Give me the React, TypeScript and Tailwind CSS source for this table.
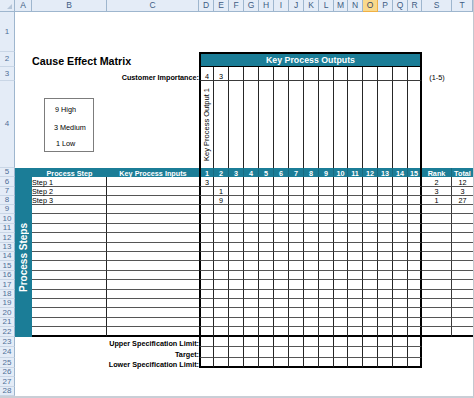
import clsx from 'clsx'

const LETTERS = ['A', 'B', 'C', 'D', 'E', 'F', 'G', 'H', 'I', 'J', 'K', 'L', 'M', 'N', 'O', 'P', 'Q', 'R', 'S', 'T']

// widths in px: row header, A, B, C, D..R (15 cols), S, T
const COL_W = [
  'w-[15px]', 'w-[17px]', 'w-[75px]', 'w-[92px]',
  'w-[15px]', 'w-[15px]', 'w-[15px]', 'w-[15px]', 'w-[15px]', 'w-[15px]', 'w-[15px]', 'w-[15px]', 'w-[15px]',
  'w-[14px]', 'w-[15px]', 'w-[15px]', 'w-[15px]', 'w-[15px]', 'w-[14px]',
  'w-[30px]', 'w-[21px]',
]

const KPO = Array.from({ length: 15 }, (_, i) => i + 1)

const IMPORTANCE = ['4', '3']

// process step rows 6-22
const STEP_ROWS = [
  { n: 6, h: 'h-[10px]', step: 'Step 1', scores: { 0: '3' } as Record<number, string>, rank: '2', total: '12' },
  { n: 7, h: 'h-[9px]', step: 'Step 2', scores: { 1: '1' } as Record<number, string>, rank: '3', total: '3' },
  { n: 8, h: 'h-[9px]', step: 'Step 3', scores: { 1: '9' } as Record<number, string>, rank: '1', total: '27' },
  { n: 9, h: 'h-[9px]' },
  { n: 10, h: 'h-[10px]' },
  { n: 11, h: 'h-[9px]' },
  { n: 12, h: 'h-[10px]' },
  { n: 13, h: 'h-[9px]' },
  { n: 14, h: 'h-[9px]' },
  { n: 15, h: 'h-[10px]' },
  { n: 16, h: 'h-[9px]' },
  { n: 17, h: 'h-[10px]' },
  { n: 18, h: 'h-[9px]' },
  { n: 19, h: 'h-[9px]' },
  { n: 20, h: 'h-[10px]' },
  { n: 21, h: 'h-[9px]' },
  { n: 22, h: 'h-[10px]' },
]

const SPEC_ROWS = [
  { n: 23, h: 'h-[10px]', label: 'Upper Specification Limit:' },
  { n: 24, h: 'h-[11px]', label: 'Target:' },
  { n: 25, h: 'h-[10px]', label: 'Lower Specification Limit:' },
]

const EMPTY_ROWS = [
  { n: 26, h: 'h-[9px]' },
  { n: 27, h: 'h-[10px]' },
  { n: 28, h: 'h-[9px]' },
]

const rowHead = 'bg-[#e4ecf7] border-r border-b border-r-[#9eb6ce] border-b-[#c9d6e6] text-center !align-middle text-[8px] text-[#4f6f98]'
const teal = 'bg-[#1b7d97] text-white font-bold'
const gridBottom = 'border-b border-b-[#555555]'

function kpoCell(i: number, bottom?: string) {
  return clsx(
    i === 0 && 'border-l-2 border-l-black',
    i === 14 ? 'border-r-2 border-r-black' : 'border-r border-r-[#262626]',
    bottom
  )
}

function RowHeader({ n, tall }: { n: number; tall?: boolean }) {
  return <td className={clsx(rowHead, tall && '!align-bottom pb-[2px]')}>{n}</td>
}

export default function App() {
  return (
    <div className="relative w-[474px] h-[398px] overflow-hidden bg-white font-['Liberation_Sans',Arial,sans-serif] text-black">
      <table className="w-[473px] table-fixed border-separate border-spacing-0 border-r border-r-[#c3c8d0] leading-none text-[7.25px] [&_td]:p-0 [&_td]:align-bottom [&_th]:p-0">
        <colgroup>
          {COL_W.map((w, i) => (
            <col key={i} className={w} />
          ))}
        </colgroup>
        <thead>
          <tr className="h-[12px]">
            <th className="relative bg-[#e4ecf7] border-r border-b border-[#9eb6ce]">
              <svg className="absolute right-[2px] bottom-[2px]" width="5" height="5" viewBox="0 0 5 5">
                <path d="M5 0 L5 5 L0 5 Z" fill="#b6c6d9" />
              </svg>
            </th>
            {LETTERS.map((l) => (
              <th
                key={l}
                className={clsx(
                  'border-r border-b text-[8.5px] font-normal',
                  l === 'O'
                    ? 'bg-[#f9d98b] border-[#f0b045] text-[#3a4a66]'
                    : 'bg-[#e4ecf7] border-[#9eb6ce] text-[#3e5c84]'
                )}
              >
                {l}
              </th>
            ))}
          </tr>
        </thead>
        <tbody>
          {/* row 1 */}
          <tr className="h-[40px]">
            <RowHeader n={1} tall />
            <td colSpan={20} />
          </tr>

          {/* row 2: title + outputs banner */}
          <tr className="h-[15px]">
            <RowHeader n={2} />
            <td />
            <td className="pl-[2px] whitespace-nowrap text-[10.7px] font-bold">Cause Effect Matrix</td>
            <td />
            <td
              colSpan={15}
              className={clsx(teal, 'text-center !align-middle text-[8.8px] border-t-2 border-l-2 border-r-2 border-b border-black')}
            >
              Key Process Outputs
            </td>
            <td />
            <td />
          </tr>

          {/* row 3: importance */}
          <tr className="h-[14px]">
            <RowHeader n={3} />
            <td />
            <td />
            <td className="pr-[1px] pb-[1px] text-right whitespace-nowrap font-bold">Customer Importance:</td>
            {KPO.map((k, i) => (
              <td key={k} className={clsx(kpoCell(i, 'border-b border-b-[#3a3a3a]'), 'text-center')}>
                {IMPORTANCE[i] ?? ''}
              </td>
            ))}
            <td className="text-center pb-[1px]">(1-5)</td>
            <td />
          </tr>

          {/* row 4: output names */}
          <tr className="h-[87px]">
            <RowHeader n={4} tall />
            <td />
            <td />
            <td />
            {KPO.map((k, i) => (
              <td key={k} className={kpoCell(i)}>
                {i === 0 && (
                  <div className="flex justify-center pb-[7px]">
                    <span className="[writing-mode:vertical-rl] rotate-180 whitespace-nowrap text-[7.5px]">
                      Key Process Output 1
                    </span>
                  </div>
                )}
              </td>
            ))}
            <td />
            <td />
          </tr>

          {/* row 5: header band */}
          <tr className="h-[9px]">
            <RowHeader n={5} />
            <td className={teal} />
            <td className={clsx(teal, 'text-center whitespace-nowrap')}>Process Step</td>
            <td className={clsx(teal, 'text-center whitespace-nowrap')}>Key Process Inputs</td>
            {KPO.map((k, i) => (
              <td
                key={k}
                className={clsx(
                  teal,
                  'text-center',
                  i === 0 && 'border-l-2 border-l-black',
                  i === 14 ? 'border-r-2 border-r-black' : 'border-r border-r-[#176b81]'
                )}
              >
                {k}
              </td>
            ))}
            <td className={clsx(teal, 'text-center border-r border-r-[#176b81]')}>Rank</td>
            <td className={clsx(teal, 'text-center')}>Total</td>
          </tr>

          {/* rows 6-22: process steps */}
          {STEP_ROWS.map((r, ri) => {
            const last = ri === STEP_ROWS.length - 1
            const bottom = last ? 'border-b-2 border-b-black' : gridBottom
            return (
              <tr key={r.n} className={r.h}>
                <RowHeader n={r.n} />
                {ri === 0 && (
                  <td rowSpan={STEP_ROWS.length} className={clsx(teal, '!align-middle')}>
                    <div className="flex justify-center">
                      <span className="[writing-mode:vertical-rl] rotate-180 whitespace-nowrap text-[10px]">
                        Process Steps
                      </span>
                    </div>
                  </td>
                )}
                <td className={clsx(bottom, 'border-r border-r-[#262626] pl-[1px] whitespace-nowrap')}>{r.step ?? ''}</td>
                <td className={bottom} />
                {KPO.map((k, i) => (
                  <td key={k} className={clsx(kpoCell(i, bottom), 'text-center')}>
                    {r.scores?.[i] ?? ''}
                  </td>
                ))}
                <td className={clsx(bottom, 'border-r border-r-[#3a3a3a] text-center')}>{r.rank ?? ''}</td>
                <td className={clsx(bottom, 'text-center')}>{r.total ?? ''}</td>
              </tr>
            )
          })}

          {/* rows 23-25: spec limits */}
          {SPEC_ROWS.map((r, ri) => {
            const bottom = ri === SPEC_ROWS.length - 1 ? 'border-b-2 border-b-black' : gridBottom
            return (
              <tr key={r.n} className={r.h}>
                <RowHeader n={r.n} />
                <td />
                <td />
                <td className="pr-[3px] text-right whitespace-nowrap font-bold">{r.label}</td>
                {KPO.map((k, i) => (
                  <td key={k} className={kpoCell(i, bottom)} />
                ))}
                <td />
                <td />
              </tr>
            )
          })}

          {EMPTY_ROWS.map((r) => (
            <tr key={r.n} className={r.h}>
              <RowHeader n={r.n} />
              <td colSpan={20} />
            </tr>
          ))}
        </tbody>
      </table>
      <div className="h-[2px] w-[474px] bg-[#c9ced6]" />

      {/* rating legend text box */}
      <div className="absolute left-[44px] top-[98px] w-[50px] h-[54px] border border-[#7c7c7c] bg-white text-[7.25px] leading-none">
        <div className="ml-[10px] mt-[7px]">9 High</div>
        <div className="ml-[9px] mt-[11px]">3 Medium</div>
        <div className="ml-[11px] mt-[8px]">1 Low</div>
      </div>
    </div>
  )
}
